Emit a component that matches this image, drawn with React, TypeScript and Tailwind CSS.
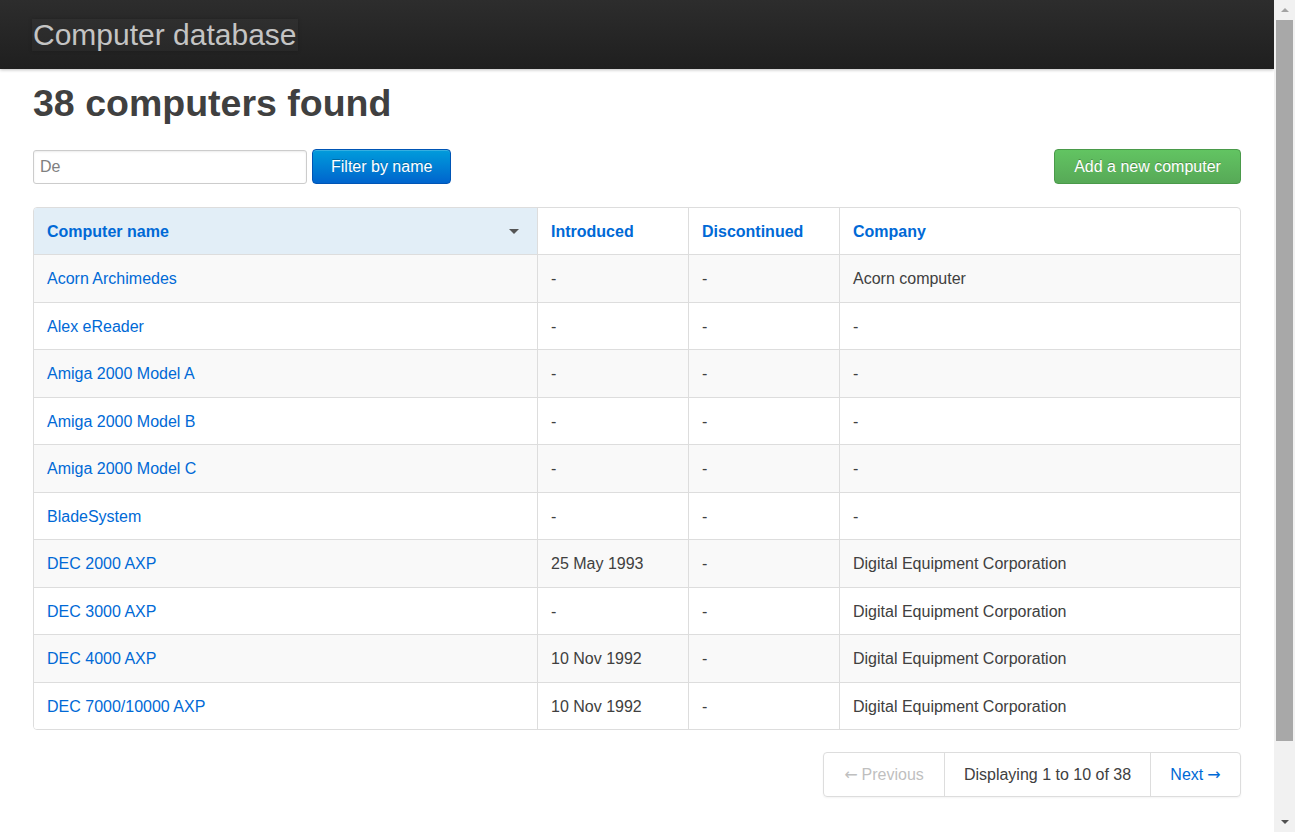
import React from 'react'

const rows: { name: string; introduced: string; discontinued: string; company: string }[] = [
  { name: 'Acorn Archimedes', introduced: '-', discontinued: '-', company: 'Acorn computer' },
  { name: 'Alex eReader', introduced: '-', discontinued: '-', company: '-' },
  { name: 'Amiga 2000 Model A', introduced: '-', discontinued: '-', company: '-' },
  { name: 'Amiga 2000 Model B', introduced: '-', discontinued: '-', company: '-' },
  { name: 'Amiga 2000 Model C', introduced: '-', discontinued: '-', company: '-' },
  { name: 'BladeSystem', introduced: '-', discontinued: '-', company: '-' },
  { name: 'DEC 2000 AXP', introduced: '25 May 1993', discontinued: '-', company: 'Digital Equipment Corporation' },
  { name: 'DEC 3000 AXP', introduced: '-', discontinued: '-', company: 'Digital Equipment Corporation' },
  { name: 'DEC 4000 AXP', introduced: '10 Nov 1992', discontinued: '-', company: 'Digital Equipment Corporation' },
  { name: 'DEC 7000/10000 AXP', introduced: '10 Nov 1992', discontinued: '-', company: 'Digital Equipment Corporation' },
]

const cols = 'grid grid-cols-[503px_151px_151px_1fr]'

export default function App() {
  return (
    <div className="flex h-[832px] w-[1295px] overflow-hidden bg-white font-['Liberation_Sans',Arial,sans-serif] text-[16px] text-[#404040]">
      <div className="flex-1 flex flex-col">
        <header className="h-[69px] shrink-0 bg-gradient-to-b from-[#2d2d2d] to-[#1f1f1f] shadow-[0_1px_3px_rgba(0,0,0,0.25)] px-[32px] flex items-center">
          <a className="block bg-white/[0.03] px-[1px] h-[32px] leading-[32px] text-[30px] text-[#c4c4c4] shadow-[0_0_4px_rgba(0,0,0,0.2)]">
            Computer database
          </a>
        </header>

        <main className="px-[33px]">
          <h1 className="mt-[14px] text-[37.5px] leading-[40px] font-bold text-[#404040]">38 computers found</h1>

          <div className="mt-[26px] flex items-center justify-between">
            <div className="flex items-center gap-[5px]">
              <input
                defaultValue="De"
                className="w-[274px] h-[34px] px-[6px] border border-[#ccc] rounded-[3px] text-[16px] text-[#808080] shadow-[inset_0_1px_2px_rgba(0,0,0,0.08)] outline-none"
              />
              <button className="h-[35px] px-[18px] rounded-[4px] border border-[#0055b5] bg-gradient-to-b from-[#049cdb] to-[#0064cd] text-white text-[16px] shadow-[inset_0_1px_0_rgba(255,255,255,0.2)] [text-shadow:0_-1px_0_rgba(0,0,0,0.25)]">
                Filter by name
              </button>
            </div>
            <button className="h-[35px] w-[187px] rounded-[4px] border border-[#4a9a4a] bg-gradient-to-b from-[#62c462] to-[#57a957] text-white text-[16px] [text-shadow:0_-1px_0_rgba(0,0,0,0.25)]">
              Add a new computer
            </button>
          </div>

          <div className="mt-[23px] border border-[#ddd] rounded-[4px] overflow-hidden">
            <div className={`${cols} h-[46px] font-bold text-[#0069d6]`}>
              <div className="bg-[#e2eef7] pl-[13px] pr-[12px] pt-[2px] flex items-center justify-between">
                <span>Computer name</span>
                <span className="mr-[6px] mb-[2px] w-0 h-0 border-x-[5px] border-x-transparent border-t-[5px] border-t-[#555]" />
              </div>
              <div className="border-l border-[#ddd] px-[13px] pt-[2px] flex items-center">Introduced</div>
              <div className="border-l border-[#ddd] px-[13px] pt-[2px] flex items-center">Discontinued</div>
              <div className="border-l border-[#ddd] px-[13px] pt-[2px] flex items-center">Company</div>
            </div>
            {rows.map((r, i) => (
              <div key={r.name} className={`${cols} h-[47.5px] border-t border-[#ddd] ${i % 2 === 0 ? 'bg-[#f9f9f9]' : 'bg-white'}`}>
                <div className="px-[13px] pt-[2px] flex items-center text-[#0069d6]">{r.name}</div>
                <div className="border-l border-[#ddd] px-[13px] pt-[2px] flex items-center">{r.introduced}</div>
                <div className="border-l border-[#ddd] px-[13px] pt-[2px] flex items-center">{r.discontinued}</div>
                <div className="border-l border-[#ddd] px-[13px] pt-[2px] flex items-center">{r.company}</div>
              </div>
            ))}
          </div>

          <div className="mt-[22px] flex justify-end">
            <div className="flex h-[45px] border border-[#ddd] rounded-[4px] shadow-[0_1px_2px_rgba(0,0,0,0.05)]">
              <span className="w-[120px] flex items-center justify-center gap-[4px] text-[#bfbfbf]">
                <span className="font-['DejaVu_Sans',sans-serif]">←</span>
                <span>Previous</span>
              </span>
              <span className="w-[206px] border-l border-[#ddd] flex items-center justify-center">Displaying 1 to 10 of 38</span>
              <span className="w-[90px] border-l border-[#ddd] flex items-center justify-center gap-[4px] text-[#0069d6]">
                <span>Next</span>
                <span className="font-['DejaVu_Sans',sans-serif]">→</span>
              </span>
            </div>
          </div>
        </main>
      </div>

      <div className="w-[21px] shrink-0 bg-[#f1f1f1] flex flex-col items-center">
        <div className="h-[20px] flex items-center justify-center">
          <span className="w-0 h-0 border-x-[4px] border-x-transparent border-b-[4px] border-b-[#a3a3a3]" />
        </div>
        <div className="w-[17px] h-[721px] bg-[#a8a8a8]" />
        <div className="flex-1" />
        <div className="h-[20px] flex items-center justify-center">
          <span className="w-0 h-0 border-x-[4px] border-x-transparent border-t-[4px] border-t-[#505050]" />
        </div>
      </div>
    </div>
  )
}
